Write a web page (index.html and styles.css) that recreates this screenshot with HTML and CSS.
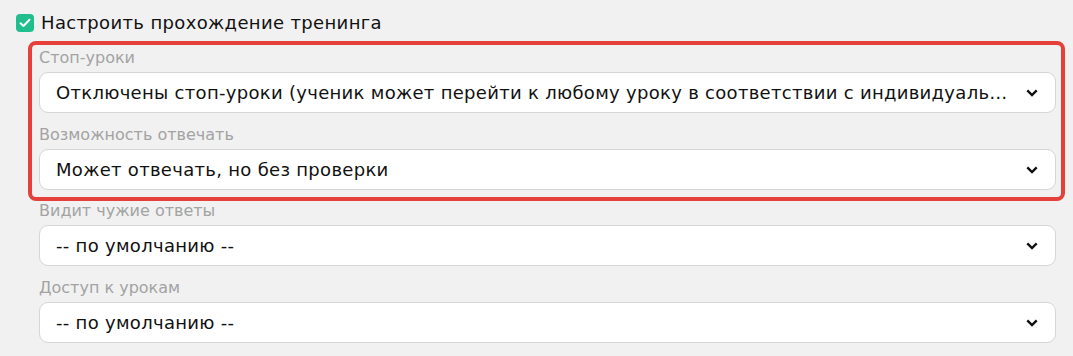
FILE: index.html
```html
<!DOCTYPE html>
<html lang="ru">
<head>
    <meta charset="UTF-8">
    <meta name="viewport" content="width=device-width, initial-scale=1.0">
    <title>Настройки тренинга</title>
    <link rel="stylesheet" href="styles.css">
</head>
<body>
    <div class="settings">
        <label class="check-row">
            <span class="checkbox">
                <svg width="12" height="10" viewBox="0 0 12 10"><path d="M1.5 5.2 L4.5 8 L10.5 1.8" fill="none" stroke="#fff" stroke-width="2" stroke-linecap="round" stroke-linejoin="round"/></svg>
            </span>
            Настроить прохождение тренинга
        </label>

        <div class="fields">
            <div class="highlight">
                <div class="field">
                    <div class="field-label">Стоп-уроки</div>
                    <div class="select">
                        <span class="select-value">Отключены стоп-уроки (ученик может перейти к любому уроку в соответствии с индивидуальным графиком открытия уроков)</span>
                        <svg class="chevron" width="12" height="8" viewBox="0 0 12 8"><path d="M1.3 1.3 L6 6 L10.7 1.3" fill="none" stroke="#111" stroke-width="2.4"/></svg>
                    </div>
                </div>
                <div class="field">
                    <div class="field-label">Возможность отвечать</div>
                    <div class="select">
                        <span class="select-value">Может отвечать, но без проверки</span>
                        <svg class="chevron" width="12" height="8" viewBox="0 0 12 8"><path d="M1.3 1.3 L6 6 L10.7 1.3" fill="none" stroke="#111" stroke-width="2.4"/></svg>
                    </div>
                </div>
            </div>

            <div class="field">
                <div class="field-label">Видит чужие ответы</div>
                <div class="select">
                    <span class="select-value">-- по умолчанию --</span>
                    <svg class="chevron" width="12" height="8" viewBox="0 0 12 8"><path d="M1.3 1.3 L6 6 L10.7 1.3" fill="none" stroke="#111" stroke-width="2.4"/></svg>
                </div>
            </div>
            <div class="field">
                <div class="field-label">Доступ к урокам</div>
                <div class="select">
                    <span class="select-value">-- по умолчанию --</span>
                    <svg class="chevron" width="12" height="8" viewBox="0 0 12 8"><path d="M1.3 1.3 L6 6 L10.7 1.3" fill="none" stroke="#111" stroke-width="2.4"/></svg>
                </div>
            </div>
        </div>
    </div>
</body>
</html>
```

FILE: styles.css
```css
body {
    font-family: "DejaVu Sans", "Noto Sans", sans-serif;
    background-color: #f1f1f1;
    margin: 0;
    color: #111;
}
.settings {
    padding: 12px 17px 0 16px;
}
.check-row {
    display: flex;
    align-items: center;
    gap: 7px;
    font-size: 18px;
    line-height: 22px;
    letter-spacing: 0.35px;
}
.checkbox {
    width: 18px;
    height: 18px;
    border-radius: 4px;
    background-color: #1fbe8c;
    display: flex;
    align-items: center;
    justify-content: center;
}
.fields {
    margin-left: 23px;
}
.highlight {
    border: 4px solid #e5403a;
    border-radius: 8px;
    margin: 7px -9px 0 -11px;
    padding: 3px 5px 7px 7px;
}
.field + .field {
    margin-top: 12px;
}
.field-label {
    font-size: 16px;
    line-height: 20px;
    color: #a3a3a3;
    margin-bottom: 4px;
}
.select {
    height: 41px;
    box-sizing: border-box;
    background-color: #fff;
    border: 1px solid #d6d6d6;
    border-radius: 9px;
    display: flex;
    align-items: center;
    padding: 0 17px 0 16px;
}
.select-value {
    flex: 1;
    font-size: 18px;
    letter-spacing: 0.3px;
    white-space: nowrap;
    overflow: hidden;
    text-overflow: ellipsis;
    margin-right: 12px;
}
.chevron {
    flex-shrink: 0;
}
```
